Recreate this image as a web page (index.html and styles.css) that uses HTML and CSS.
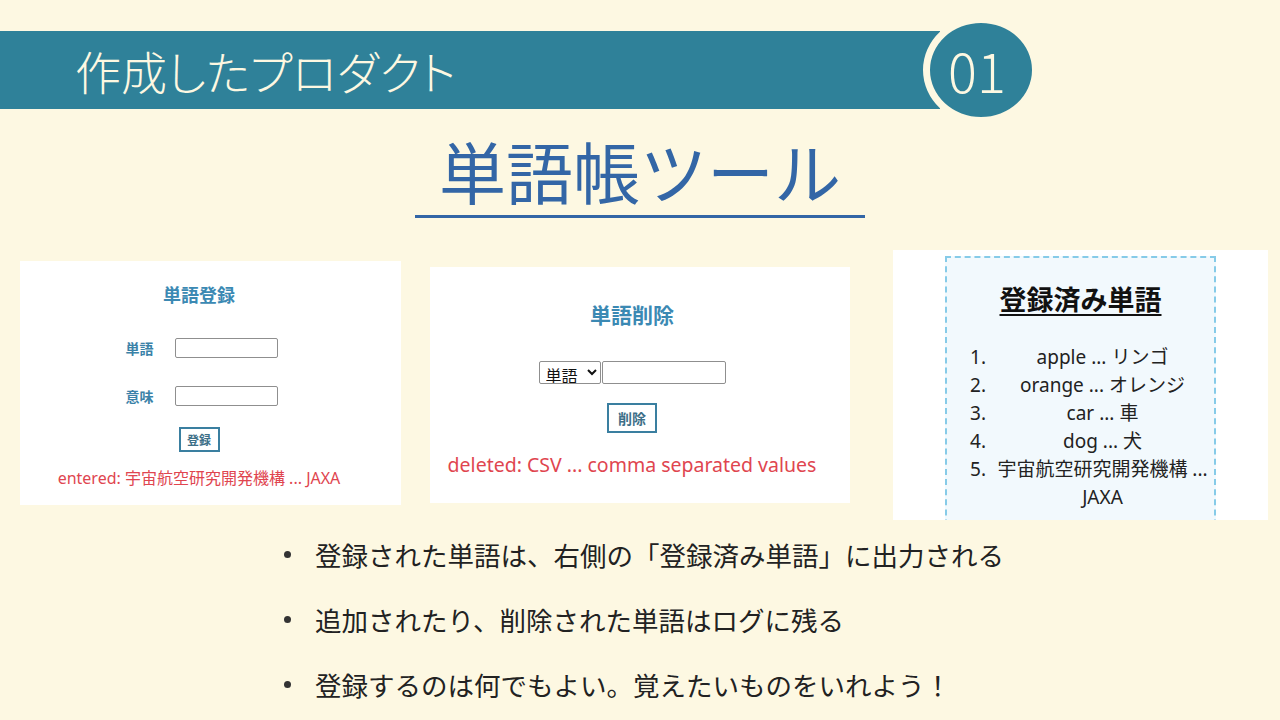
FILE: index.html
```html
<!DOCTYPE html>
<html lang="ja">
<head>
<meta charset="utf-8">
<title>作成したプロダクト</title>
<link rel="stylesheet" href="styles.css">
</head>
<body>
<header class="header">
  <div class="header-bar"><h1 class="header-title">作成したプロダクト</h1></div>
  <div class="header-badge">01</div>
</header>

<div class="title-wrap">
  <h2 class="title">単語帳ツール</h2>
</div>

<section class="panels">
  <div class="panel panel-register">
    <div class="panel-title">単語登録</div>
    <div class="form-row row-first">
      <span class="form-label">単語</span>
      <input class="text-input" type="text">
    </div>
    <div class="form-row row-second">
      <span class="form-label">意味</span>
      <input class="text-input" type="text">
    </div>
    <button class="btn btn-register">登録</button>
    <div class="message message-register">entered: 宇宙航空研究開発機構 ... JAXA</div>
  </div>

  <div class="panel panel-delete">
    <div class="panel-title panel-title-lg">単語削除</div>
    <div class="delete-row">
      <select class="select"><option>単語</option></select><input class="text-input delete-input" type="text">
    </div>
    <button class="btn btn-delete">削除</button>
    <div class="message message-delete">deleted: CSV ... comma separated values</div>
  </div>

  <div class="panel panel-list">
    <div class="list-box">
      <div class="list-title">登録済み単語</div>
      <ol class="word-list">
        <li>apple ... リンゴ</li>
        <li>orange ... オレンジ</li>
        <li>car ... 車</li>
        <li>dog ... 犬</li>
        <li>宇宙航空研究開発機構 ... JAXA</li>
      </ol>
    </div>
  </div>
</section>

<ul class="notes">
  <li>登録された単語は、右側の「登録済み単語」に出力される</li>
  <li>追加されたり、削除された単語はログに残る</li>
  <li>登録するのは何でもよい。覚えたいものをいれよう！</li>
</ul>
</body>
</html>
```

FILE: styles.css
```css
html, body {
  margin: 0;
  padding: 0;
}

body {
  width: 1280px;
  height: 720px;
  overflow: hidden;
  background: #fdf8e2;
  font-family: "Noto Sans", "Noto Sans CJK JP", sans-serif;
  color: #222;
}

/* Header */
.header {
  position: relative;
  margin-top: 31px;
  height: 78px;
}

.header-bar {
  width: 940px;
  height: 78px;
  background: #2f8199;
  display: flex;
  align-items: center;
  padding-left: 75px;
  box-sizing: border-box;
}

.header-title {
  margin: 0;
  font-family: "Noto Sans CJK JP", sans-serif;
  font-weight: 300;
  font-size: 46px;
  line-height: 1;
  color: #fdf8e2;
  font-feature-settings: "palt";
}

.header-badge {
  position: absolute;
  left: 923px;
  top: -15px;
  width: 94px;
  height: 94px;
  border: 7px solid #fdf8e2;
  border-radius: 50%;
  background: #2f8199;
  color: #fdf8e2;
  display: flex;
  align-items: center;
  justify-content: center;
  padding-right: 8px;
  box-sizing: content-box;
  font-family: "Noto Sans CJK JP", sans-serif;
  font-weight: 300;
  font-size: 54px;
  line-height: 1;
}

/* Title */
.title-wrap {
  display: flex;
  justify-content: center;
  margin-top: 32px;
}

.title {
  margin: 0;
  width: 450px;
  text-align: center;
  font-family: "Noto Sans CJK JP", sans-serif;
  font-weight: 400;
  font-size: 67px;
  line-height: 57px;
  color: #3366a6;
  padding-bottom: 17px;
  border-bottom: 3px solid #3366a6;
}

/* Panels */
.panels {
  display: flex;
  align-items: flex-start;
  margin-top: 32px;
  padding-left: 20px;
}

.panel {
  background: #fff;
  box-sizing: border-box;
  display: flex;
  flex-direction: column;
  align-items: center;
}

.panel-register {
  width: 381px;
  height: 244px;
  margin-top: 11px;
  padding: 21px 23px 0 0;
}

.panel-title {
  font-family: "Noto Sans CJK JP", sans-serif;
  font-weight: 700;
  font-size: 18px;
  line-height: 24px;
  color: #3b89b3;
}

.form-row {
  display: flex;
  align-items: center;
  gap: 21px;
  padding-left: 5px;
}

.row-first {
  margin-top: 32px;
}

.row-second {
  margin-top: 28px;
}

.form-label {
  font-family: "Noto Sans CJK JP", sans-serif;
  font-weight: 700;
  font-size: 14px;
  line-height: 20px;
  color: #3b82a8;
}

.text-input {
  width: 103px;
  height: 20px;
  box-sizing: border-box;
  border: 1px solid #8f8f8f;
  border-radius: 2px;
  background: #fff;
  margin: 0;
  padding: 0 3px;
}

.btn {
  background: #fff;
  border: 2px solid #3a7fa0;
  color: #3d6f88;
  font-family: "Noto Sans CJK JP", sans-serif;
  font-weight: 700;
  padding: 0;
  margin: 0;
  box-sizing: border-box;
}

.btn-register {
  width: 41px;
  height: 25px;
  font-size: 12px;
  margin-top: 21px;
}

.message {
  color: #e0454f;
  white-space: nowrap;
}

.message-register {
  font-size: 16px;
  line-height: 20px;
  margin-top: 16px;
}

.panel-delete {
  width: 420px;
  height: 236px;
  margin-left: 29px;
  margin-top: 17px;
  padding: 33px 16px 0 0;
}

.panel-title-lg {
  font-size: 21px;
  line-height: 28px;
}

.delete-row {
  display: flex;
  margin-top: 33px;
  height: 23px;
}

.select {
  width: 62px;
  height: 23px;
  margin: 0 1px 0 0;
  box-sizing: border-box;
  border: 1px solid #8f8f8f;
  border-radius: 2px;
  background: #fff;
  font-family: "Noto Sans CJK JP", sans-serif;
  font-size: 16px;
  color: #111;
  padding: 0 0 0 2px;
}

.delete-input {
  width: 124px;
  height: 23px;
}

.btn-delete {
  width: 50px;
  height: 30px;
  font-size: 14px;
  margin-top: 19px;
}

.message-delete {
  font-size: 19.5px;
  line-height: 24px;
  margin-top: 20px;
}

.panel-list {
  width: 375px;
  height: 270px;
  margin-left: 43px;
  padding: 6px 0 0 52px;
  overflow: hidden;
  align-items: flex-start;
}

.list-box {
  width: 271px;
  height: 300px;
  box-sizing: border-box;
  background: #f2f9fd;
  border: 2px dashed #86cbe8;
  flex-shrink: 0;
}

.list-title {
  margin-top: 25px;
  text-align: center;
  font-family: "Noto Sans CJK JP", sans-serif;
  font-weight: 700;
  font-size: 27px;
  line-height: 32px;
  color: #111;
  text-decoration: underline;
  text-underline-offset: 4px;
  text-decoration-thickness: 2px;
}

.word-list {
  margin: 28px 0 0;
  padding: 0 0 0 44px;
  font-size: 19px;
  line-height: 28px;
  color: #222;
}

.word-list li {
  text-align: center;
}

/* Notes */
.notes {
  list-style: none;
  margin: 2px 0 0;
  padding-left: 284px;
  font-family: "Noto Sans CJK JP", sans-serif;
  font-size: 26.5px;
  line-height: 65px;
  color: #222;
}

.notes li {
  display: flex;
  align-items: center;
}

.notes li::before {
  content: "";
  width: 7px;
  height: 7px;
  border-radius: 50%;
  background: #333;
  margin-right: 24px;
  flex-shrink: 0;
}
```
